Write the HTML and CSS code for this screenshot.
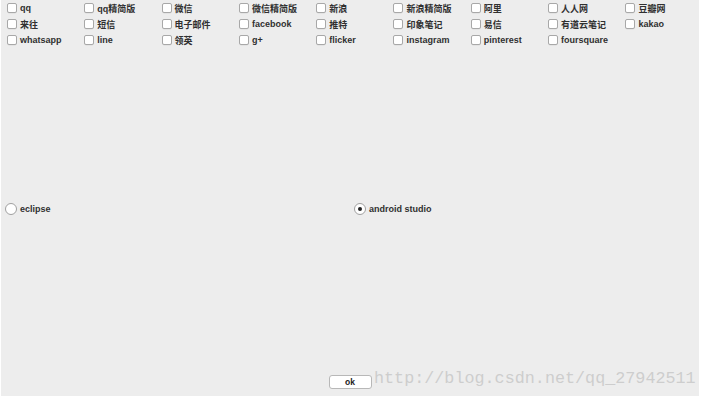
FILE: index.html
```html
<!DOCTYPE html>
<html>
<head>
<meta charset="utf-8">
<link rel="stylesheet" href="styles.css">
</head>
<body>
<div class="panel">
  <div class="checks">
    <label class="item"><span class="box"></span>qq</label>
    <label class="item"><span class="box"></span>qq精简版</label>
    <label class="item"><span class="box"></span>微信</label>
    <label class="item"><span class="box"></span>微信精简版</label>
    <label class="item"><span class="box"></span>新浪</label>
    <label class="item"><span class="box"></span>新浪精简版</label>
    <label class="item"><span class="box"></span>阿里</label>
    <label class="item"><span class="box"></span>人人网</label>
    <label class="item"><span class="box"></span>豆瓣网</label>
    <label class="item"><span class="box"></span>来往</label>
    <label class="item"><span class="box"></span>短信</label>
    <label class="item"><span class="box"></span>电子邮件</label>
    <label class="item"><span class="box"></span>facebook</label>
    <label class="item"><span class="box"></span>推特</label>
    <label class="item"><span class="box"></span>印象笔记</label>
    <label class="item"><span class="box"></span>易信</label>
    <label class="item"><span class="box"></span>有道云笔记</label>
    <label class="item"><span class="box"></span>kakao</label>
    <label class="item"><span class="box"></span>whatsapp</label>
    <label class="item"><span class="box"></span>line</label>
    <label class="item"><span class="box"></span>领英</label>
    <label class="item"><span class="box"></span>g+</label>
    <label class="item"><span class="box"></span>flicker</label>
    <label class="item"><span class="box"></span>instagram</label>
    <label class="item"><span class="box"></span>pinterest</label>
    <label class="item"><span class="box"></span>foursquare</label>
  </div>
  <div class="radios">
    <label class="ritem"><span class="radio"></span>eclipse</label>
    <label class="ritem"><span class="radio on"></span>android studio</label>
  </div>
  <div class="footer">
    <button class="ok">ok</button>
  </div>
  <div class="watermark">http://blog.csdn.net/qq_27942511</div>
</div>
</body>
</html>
```
FILE: styles.css
```css
html, body {
  margin: 0;
  padding: 0;
  background: #ffffff;
}
.panel {
  position: relative;
  margin-left: 1px;
  width: 698px;
  height: 396px;
  background: #ededed;
  display: flex;
  flex-direction: column;
  font-family: "Liberation Sans", "Noto Sans CJK SC", sans-serif;
  font-size: 9px;
  font-weight: bold;
  color: #303030;
}
.checks {
  display: grid;
  grid-template-columns: repeat(9, 77.3px);
  grid-auto-rows: 16px;
  padding: 0 0 0 6px;
}
.item {
  display: flex;
  align-items: center;
  gap: 3px;
  white-space: nowrap;
}
.box {
  width: 8px;
  height: 8px;
  border: 1px solid #a8a8a8;
  border-radius: 2px;
  background: #fff;
  box-shadow: 0 0.5px 0 rgba(0,0,0,0.08);
}
.radios {
  margin-top: 153px;
  display: grid;
  grid-template-columns: 349px 349px;
  height: 16px;
}
.ritem {
  display: flex;
  align-items: center;
  gap: 3px;
  padding-left: 4px;
}
.radio {
  width: 10px;
  height: 10px;
  border: 1px solid #a0a0a0;
  border-radius: 50%;
  background: #fff;
  display: flex;
  align-items: center;
  justify-content: center;
  box-sizing: content-box;
}
.radio.on::after {
  content: "";
  width: 4px;
  height: 4px;
  border-radius: 50%;
  background: #222;
}
.footer {
  margin-top: auto;
  display: flex;
  justify-content: center;
  padding-bottom: 7px;
}
.ok {
  width: 43px;
  height: 14px;
  padding: 0;
  border: 1px solid #b8b8b8;
  border-radius: 3px;
  background: #fff;
  font-family: "Liberation Sans", sans-serif;
  font-size: 8.5px;
  font-weight: bold;
  color: #222;
  line-height: 12px;
}
.watermark {
  position: absolute;
  left: 373px;
  top: 369px;
  font-family: "Liberation Mono", monospace;
  font-size: 16.75px;
  color: #cdcdcd;
  font-weight: normal;
  white-space: nowrap;
}
```
